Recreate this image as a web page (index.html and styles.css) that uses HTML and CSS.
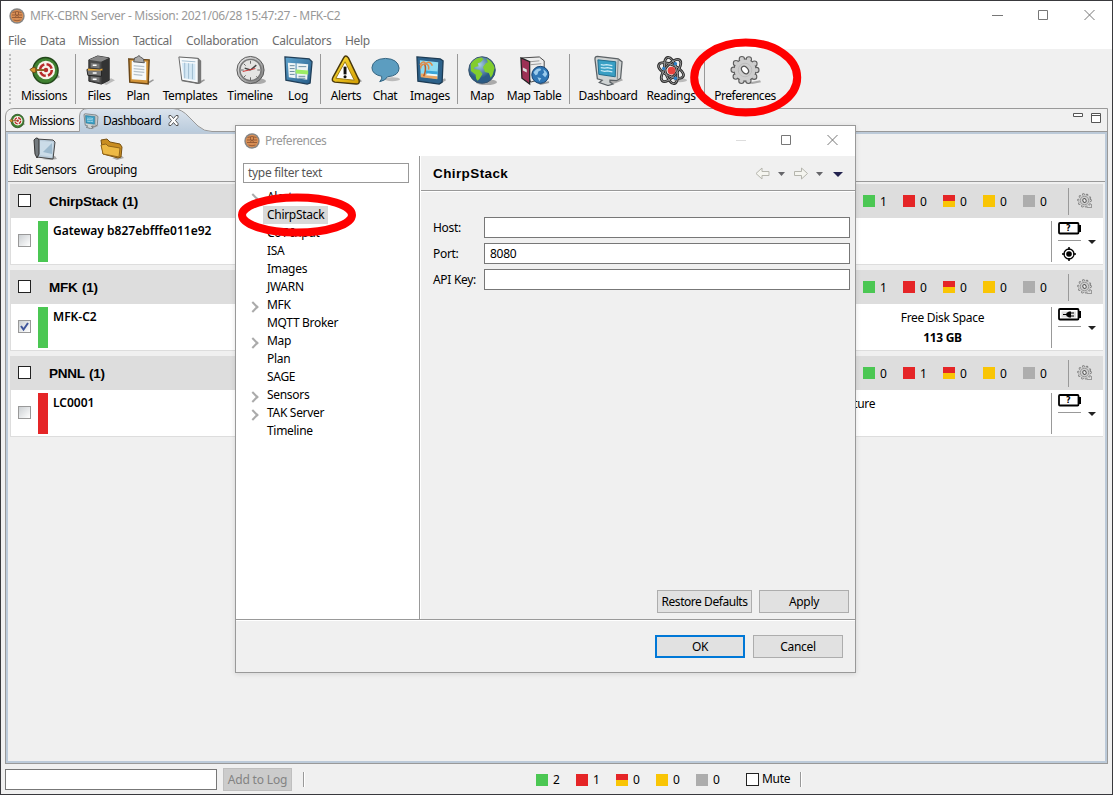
FILE: index.html
```html
<!DOCTYPE html>
<html lang="en">
<head>
<meta charset="utf-8">
<title>MFK-CBRN Server</title>
<link rel="stylesheet" href="styles.css">
</head>
<body>
<svg class="defs" width="0" height="0">
  <defs>
    <linearGradient id="blue" x2="1" y2="1"><stop stop-color="#5fa3cd"/><stop offset="1" stop-color="#255b87"/></linearGradient>
    <linearGradient id="tabg" x2="0" y2="1"><stop stop-color="#dce4ed"/><stop offset="1" stop-color="#b9cbdc"/></linearGradient>
    <linearGradient id="gold" x2="1" y2="1"><stop stop-color="#ffe23c"/><stop offset="1" stop-color="#d19b00"/></linearGradient>
    <linearGradient id="metal" x2="1" y2="1"><stop stop-color="#eee"/><stop offset="1" stop-color="#777"/></linearGradient>
    <radialGradient id="ocean" cx=".4" cy=".3"><stop stop-color="#a9cfe6"/><stop offset="1" stop-color="#2b5b85"/></radialGradient>
    <symbol id="logo" viewBox="0 0 16 16"><circle cx="8" cy="8" r="7.700" fill="#858585"/><circle cx="8" cy="8" r="6.300" fill="#d98f55"/><path d="M3.500 4.500Q8 2.500 12.500 4.500M3 7H13M3 9.500H13M4.500 12Q8 13.500 11.500 12M6.500 4V7M9.500 4V7M6 9.500L8 7L10 9.500" fill="none" stroke="#8a5230" stroke-width=".8"/></symbol>
    <symbol id="target" viewBox="0 0 32 32"><path d="M18 29l14-6-2-3z" fill="#aaa"/><ellipse cx="17" cy="16" rx="13" ry="13.500" fill="#3f8130" stroke="#23471b" stroke-width="1.500"/><circle cx="17.500" cy="15.500" r="9.500" fill="#f7f3e9"/><circle cx="17.500" cy="15.500" r="6" fill="none" stroke="#b92b2b" stroke-width="2.600" stroke-dasharray="7 2.400"/><circle cx="17.500" cy="15.500" r="2.300" fill="#b92b2b"/><path d="M5 15.500H16" stroke="#8a6424" stroke-width="2"/><path d="M1 15l3-2h3v5H4z" fill="#d9962f" stroke="#6b4a1a"/></symbol>
    <symbol id="monitor" viewBox="0 0 32 32"><path d="M14 27l15-3 2 2-10 4z" fill="#aaa"/><path d="M2 4q0-2.500 2.500-2.500L26 4l4 3-1.500 17-4 2.500-7-.5v2l3 2-5 1.500-9-3 3-2.500-5-1.500z" fill="#cfd3d3" stroke="#5b6165" stroke-width="1.300"/><path d="M26 4l-1 22" stroke="#888"/><path d="M5 5l18.500 2-.5 15.500L6 20z" fill="#399fc4" stroke="#216b8b"/><path d="M8 10l3 .5 3-.5 6 1M8 13l4 .5 3-.5 5 1M8 16l4 1 3-.5 5 1" fill="none" stroke="#c9ebf7" stroke-width="1.300"/></symbol>
    <symbol id="gear" viewBox="0 0 32 32"><path d="M17 29l14-3 1 2-9 2z" fill="#aaa"/><g fill="none" stroke-linecap="round"><circle cx="15.500" cy="15.500" r="11.700" stroke="#5c5c5c" stroke-width="6.600" stroke-dasharray="0 7.351"/><circle cx="15.500" cy="15.500" r="10.800" stroke="#5c5c5c" stroke-width="2.400"/><circle cx="15.500" cy="15.500" r="11.700" stroke="#cdcdcd" stroke-width="4.400" stroke-dasharray="0 7.351"/></g><circle cx="15.500" cy="15.500" r="10.900" fill="#cdcdcd"/><circle cx="15.500" cy="15.500" r="7" fill="none" stroke="#bcbcbc"/><ellipse cx="15.500" cy="15.500" rx="3" ry="4.300" transform="rotate(-40 15.500 15.500)" fill="#fff" stroke="#555" stroke-width="1.300"/></symbol>
    <symbol id="smallgear" viewBox="0 0 16 16"><path d="M10 14.500h5M14.500 11v3" stroke="#999"/><g fill="none" stroke-linecap="round"><circle cx="7.500" cy="7.500" r="5.900" stroke="#777" stroke-width="2.800" stroke-dasharray="0 3.707"/><circle cx="7.500" cy="7.500" r="5.900" stroke="#d0d0d0" stroke-width="1.300" stroke-dasharray="0 3.707"/></g><circle cx="7.500" cy="7.500" r="5.500" fill="#cfcfcf"/><circle cx="7.500" cy="7.500" r="4.200" fill="none" stroke="#8c8c8c" stroke-width=".8"/><ellipse cx="7.500" cy="7.500" rx="1.600" ry="2" transform="rotate(-35 7.500 7.500)" fill="#eee" stroke="#555"/></symbol>
    <symbol id="battery" viewBox="0 0 23 13"><rect x="1" y="1" width="19.500" height="10.500" rx="1" fill="#fff" stroke="#000" stroke-width="1.800"/><path d="M22 3v7" stroke="#000" stroke-width="2"/></symbol>
  </defs>
</svg>

<div class="window">
  <header class="titlebar">
    <svg class="i16"><use href="#logo"/></svg>
    <span class="title">MFK-CBRN Server - Mission: 2021/06/28 15:47:27 - MFK-C2</span>
    <svg class="caption" width="104" height="12" viewBox="0 0 104 12" fill="none" stroke="#777"><path d="M0 6.500h11M46.500 1.500h9v9h-9zM92.500 1l10 10M102.500 1l-10 10"/></svg>
  </header>
  <nav class="menubar"><span style="width:32px">File</span><span style="width:38px">Data</span><span style="width:55px">Mission</span><span style="width:53px">Tactical</span><span style="width:86px">Collaboration</span><span style="width:73px">Calculators</span><span>Help</span></nav>

  <div class="toolbar">
    <i class="grip"></i>
    <div class="tool" style="width:62px"><svg><use href="#target"/></svg><span>Missions</span></div>
    <i class="sep s1"></i>
    <div class="tool" style="width:38px"><svg viewBox="0 0 32 32"><path d="M18 29l10-5 4 2-9 5z" fill="#bbb"/><path d="M5 5l9-4 12 2v23l-8 4L5 27z" fill="#4a4a4a" stroke="#2a2a2a"/><path d="M5 5l9-4 12 2-8 4z" fill="#888"/><path d="M18 7l8-4v23l-8 4z" fill="#333"/><path d="M7 8l9 1v5l-9-1zM7 22l9 1v5l-9-2z" fill="#777"/><path d="M3 15l3-1 12 1v7L4 21z" fill="#777" stroke="#222"/><path d="M4 14l12 1 3-1v2H4z" fill="#e9aa3a"/><path d="M9 10.500h4M9 18.500h4M9 25h4" stroke="#fff" stroke-width="1.500"/></svg><span>Files</span></div>
    <div class="tool" style="width:40px"><svg viewBox="0 0 32 32"><path d="M22 30l9-5 1 1-6 4z" fill="#999"/><path d="M6 4l21 1-1 25-19-2z" fill="#d39438" stroke="#6b4718" stroke-width="1.500"/><path d="M9 6l15 1v19L9 25z" fill="#f6f9fa"/><path d="M11 11l11 1M11 14l11 1M11 17l11 1M11 20l9 1" stroke="#b7c2c9" stroke-width="1.300"/><path d="M11 7l1-4 3-1q1-3 3 0l3 2 1 4z" fill="#aaa" stroke="#555"/></svg><span>Plan</span></div>
    <div class="tool" style="width:64px"><svg viewBox="0 0 32 32"><path d="M20 30l10-5 1 1-6 4z" fill="#999"/><path d="M5 2l19 1 3 3v23l-3 1-17-3z" fill="#777"/><path d="M4 2l20 1.500V29L7 26z" fill="#f8fafb" stroke="#666"/><path d="M7 8l14 1v17L9 24z" fill="#d4e8f5"/><path d="M7 6l14 1M10 8v16M14 8.500v16M18 9v16" stroke="#9fbcd0"/></svg><span>Templates</span></div>
    <div class="tool" style="width:56px"><svg viewBox="0 0 32 32"><ellipse cx="22" cy="27" rx="10" ry="3" fill="#aaa"/><circle cx="16" cy="15.500" r="14" fill="url(#metal)" stroke="#555"/><circle cx="16" cy="15.500" r="11" fill="#e4e4e2" stroke="#777" stroke-width="1.500"/><path d="M16 6v3M16 23v3M6 15.500h3M23 15.500h3M9 9l2 2M22 22l2 2M9 23l2-2" stroke="#666"/><path d="M16 15.500l6-5M16 15.500l-6-2" stroke="#444" stroke-width="1.500"/><path d="M8 17l13-3" stroke="#c33"/></svg><span>Timeline</span></div>
    <div class="tool" style="width:40px"><svg viewBox="0 0 32 32"><path d="M2 2l25 2 3 3-2 22-3 1L3 26z" fill="url(#blue)" stroke="#1f3e58" stroke-width="1.300"/><path d="M5 8l8 .5V24l-7-1zM14 8.500l12 1-1 16-11-1.500z" fill="#eef4f5"/><path d="M13 15l13 1v4l-13-1z" fill="#9bec65"/><path d="M7 11h5M7 14h5M7 17h5M7 20h5M16 12h8M16 22h7M16 24h7" stroke="#678b9f"/></svg><span>Log</span></div>
    <i class="sep s2"></i>
    <div class="tool" style="width:40px"><svg viewBox="0 0 32 32"><path d="M25 30l7-3-5-5z" fill="#999"/><path d="M13 3q2-4 5 0l11 23q1 4-3 4L4 28q-4-1-2-5z" fill="url(#gold)" stroke="#49380c" stroke-width="1.500"/><path d="M14.500 7L24 26 5 24z" fill="#fff" stroke="#9b7a15"/><path d="M14.500 12v8" stroke="#111" stroke-width="3"/><circle cx="14.500" cy="22.500" r="1.600" fill="#111"/></svg><span>Alerts</span></div>
    <div class="tool" style="width:38px"><svg viewBox="0 0 32 32"><ellipse cx="23" cy="25" rx="8" ry="2" fill="#bbb"/><path d="M12 22Q2 20 2 13 3 4 16 3.500q13 .5 14 10 0 8-12 9-2 4-8 5 3-3 2-5.500z" fill="#5c9dc0" stroke="#31617e"/></svg><span>Chat</span></div>
    <div class="tool" style="width:52px"><svg viewBox="0 0 32 32"><path d="M18 29l13-5 1 2-6 4z" fill="#aaa"/><path d="M2 2l24 2 3 2-1 22-3 2L3 27z" fill="#2d628b" stroke="#1c3b54" stroke-width="1.300"/><path d="M5 5.500l19 2-1 17-17-2z" fill="#8fdcf2"/><path d="M6 19q9 0 17 2v4L6 23z" fill="#e9a664"/><path d="M11 16l12.500 1v3l-12-1z" fill="#3ba5d8"/><path d="M13 19l10 1v2l-12-1z" fill="#eefcff"/><path d="M9 22q3-7 1-13" stroke="#b55c29" stroke-width="1.600" fill="none"/><path d="M5 10q4-5 6-1 4-4 7 2M11 9q4 1 3 6M11 9q-6 1-5 5" fill="none" stroke="#e08b4a" stroke-width="1.600"/></svg><span>Images</span></div>
    <i class="sep s3"></i>
    <div class="tool" style="width:40px"><svg viewBox="0 0 32 32"><ellipse cx="20" cy="28" rx="11" ry="3" fill="#aaa"/><circle cx="15.500" cy="15.500" r="13.700" fill="url(#ocean)" stroke="#35516a"/><path d="M4 9q4-6 11-6.500l2 2-3 3-3 1 1 3-4 1-1 2 6 1 3 4-3 5-2 2q-2-1-2-6l-5-4zM20 3.500q7 3 8.500 10l-2 7-2 3-2-5-4-1-2-5 3-4 2-1z" fill="#82cd2d"/></svg><span>Map</span></div>
    <div class="tool" style="width:64px"><svg viewBox="0 0 32 32"><path d="M19 29l12-2v2l-9 2z" fill="#999"/><path d="M3 3l18-1 5 4v18l-14 4z" fill="#ececec" stroke="#444"/><path d="M11 7l10-1M12 10l11-1" stroke="#999"/><path d="M2 3l9 4v23l-8-6z" fill="#9c3155" stroke="#222" stroke-width="1.300"/><path d="M4 13l4 2v3l-4-2z" fill="#ddd"/><circle cx="22" cy="20.500" r="8.800" fill="#2f76b5" stroke="#17406c"/><path d="M15 18q3-5 7-4l1 1.500-3 1.500-1 3-2 1zM25 15q4 2 4 5l-2 3-3-3 2-2zM19 23l4 1-2 3z" fill="#9bcbec"/></svg><span>Map Table</span></div>
    <i class="sep s4"></i>
    <div class="tool" style="width:68px"><svg><use href="#monitor"/></svg><span>Dashboard</span></div>
    <div class="tool" style="width:58px"><svg viewBox="0 0 32 32" fill="none"><ellipse cx="25" cy="26" rx="7" ry="2" fill="#bbb"/><g stroke="#2b2b2b" stroke-width="2.800"><ellipse cx="15.500" cy="16" rx="14" ry="6" transform="rotate(25 15.500 16)"/><ellipse cx="15.500" cy="16" rx="14" ry="6" transform="rotate(75 15.500 16)"/><ellipse cx="15.500" cy="16" rx="14" ry="6" transform="rotate(130 15.500 16)"/></g><g stroke="#999" stroke-width=".9"><ellipse cx="15.500" cy="16" rx="14" ry="6" transform="rotate(25 15.500 16)"/><ellipse cx="15.500" cy="16" rx="14" ry="6" transform="rotate(75 15.500 16)"/><ellipse cx="15.500" cy="16" rx="14" ry="6" transform="rotate(130 15.500 16)"/></g><circle cx="16" cy="16" r="4" fill="#e8433d"/><g fill="#2d7fc4"><circle cx="20" cy="9" r="1.800"/><circle cx="8" cy="14" r="1.800"/><circle cx="20" cy="24" r="1.800"/></g></svg><span>Readings</span></div>
    <i class="sep s5"></i>
    <div class="tool prefs" style="width:68px"><svg><use href="#gear"/></svg><span>Preferences</span></div>
  </div>

  <main class="folder">
    <div class="tabs">
      <svg class="tabshape" width="1103" height="24" viewBox="0 0 1103 24" fill="none" stroke="#999"><path d="M.5 24V8Q1 .5 9 .5H1102.500V24"/><path d="M0 23.500H74.500V8Q75 .5 83 .5H168Q177 1 184 9L193 18Q199 23.500 207 23.500H1103V24H0z" fill="url(#tabg)" stroke="none"/><path d="M0 23.500H74.500V8Q75 .5 83 .5H168Q177 1 184 9L193 18Q199 23.500 207 23.500H1103"/></svg>
      <div class="tab first"><svg class="i16"><use href="#target"/></svg><span>Missions</span></div>
      <div class="tab"><svg class="i16"><use href="#monitor"/></svg><span>Dashboard</span><svg width="11" height="11" viewBox="0 0 11 11"><path d="M1 .5h2l2.500 3 2.500-3h2v2L7.500 5.500l2.500 3v2H8l-2.500-3-2.500 3H1v-2l2.500-3L1 2.500z" fill="#fff" stroke="#555"/></svg></div>
      <svg class="viewbtns" width="29" height="12" viewBox="0 0 29 12" fill="#fff" stroke="#555"><path d="M.5 1.500h9v3h-9zM18.500 1.500h9v9h-9zM18.500 3.500h9"/></svg>
    </div>
    <div class="content">
      <div class="subbar">
        <div class="subtool" style="width:71px"><svg width="26" height="24" viewBox="0 0 26 24"><path d="M10 22l13-3 2 3-6 1z" fill="#aaa"/><path d="M4 2l17 1 2 2-2 17L5 20z" fill="#b9cbd9" stroke="#444"/><path d="M8 4l13 1-1 15L8 18z" fill="#cbdce8"/><path d="M11 15l9-9v11z" fill="#9cb9cd"/><path d="M2 3q3-4 5 0v14l-2 4-2-4z" fill="#747a7e" stroke="#333"/></svg><span>Edit Sensors</span></div>
        <div class="subtool" style="width:64px"><svg width="26" height="24" viewBox="0 0 26 24"><path d="M13 21l10-2 2 2-7 2z" fill="#aaa"/><path d="M2 3l6-1 3 3 10 2 2 3-1 10-3 1-15-4z" fill="#c98d20" stroke="#785112"/><path d="M2 8l5-1 2 2 12 2-1 9-16-3z" fill="#edb944" stroke="#936619"/></svg><span>Grouping</span></div>
      </div>

      <section class="group">
        <div class="ghead"><i class="check"></i><b>ChirpStack (1)</b>
          <div class="counts"><i class="g"></i><span>1</span><i class="r"></i><span>0</span><i class="ry"></i><span>0</span><i class="y"></i><span>0</span><i class="n"></i><span>0</span></div>
          <i class="vline"></i><svg class="i16"><use href="#smallgear"/></svg></div>
        <div class="row"><i class="check dim"></i><i class="bar green"></i><b>Gateway b827ebfffe011e92</b>
          <div class="side"><svg class="bat" width="23" height="13"><use href="#battery"/></svg><span class="q">?</span><i class="hl"></i><svg class="aim" width="14" height="14" viewBox="0 0 14 14"><circle cx="7" cy="7" r="5" fill="none" stroke="#000" stroke-width="1.300"/><circle cx="7" cy="7" r="2.800"/><path d="M7 0v3M7 11v3M0 7h3M11 7h3" stroke="#000" stroke-width="1.500"/></svg></div><i class="down"></i></div>
      </section>
      <section class="group">
        <div class="ghead"><i class="check"></i><b>MFK (1)</b>
          <div class="counts"><i class="g"></i><span>1</span><i class="r"></i><span>0</span><i class="ry"></i><span>0</span><i class="y"></i><span>0</span><i class="n"></i><span>0</span></div>
          <i class="vline"></i><svg class="i16"><use href="#smallgear"/></svg></div>
        <div class="row"><i class="check dim"><svg width="11" height="11" viewBox="0 0 11 11"><path d="M2 5l2.500 3.500L9 2" fill="none" stroke="#3f559b" stroke-width="2"/></svg></i><i class="bar green"></i><b>MFK-C2</b>
          <div class="reading disk"><span>Free Disk Space</span><b>113 GB</b></div>
          <div class="side"><svg class="bat" width="23" height="13" viewBox="0 0 23 13"><use href="#battery"/><path d="M3.500 3.500h14.500v6H3.500z" fill="#ddd"/><path d="M5 6.500h4M13 5h3M13 8h3" stroke="#000" stroke-width="1.200"/><path d="M13 3.500v6h-2q-3-1-3-3t3-3z"/></svg><i class="hl"></i></div><i class="down"></i></div>
      </section>
      <section class="group">
        <div class="ghead"><i class="check"></i><b>PNNL (1)</b>
          <div class="counts"><i class="g"></i><span>0</span><i class="r"></i><span>1</span><i class="ry"></i><span>0</span><i class="y"></i><span>0</span><i class="n"></i><span>0</span></div>
          <i class="vline"></i><svg class="i16"><use href="#smallgear"/></svg></div>
        <div class="row"><i class="check dim"></i><i class="bar red"></i><b>LC0001</b>
          <div class="reading temp"><span>Temperature</span></div>
          <div class="side"><svg class="bat" width="23" height="13"><use href="#battery"/></svg><span class="q">?</span><i class="hl"></i></div><i class="down"></i></div>
      </section>
    </div>
  </main>

  <footer class="status">
    <div class="entry"></div><div class="btn add">Add to Log</div><i class="ssep"></i>
    <div class="counts"><i class="g"></i><span>2</span><i class="r"></i><span>1</span><i class="ry"></i><span>0</span><i class="y"></i><span>0</span><i class="n"></i><span>0</span></div>
    <i class="check"></i><span class="mute">Mute</span><i class="ssep end"></i>
  </footer>
</div>

<div class="dialog">
  <div class="dtitle"><svg class="i16"><use href="#logo"/></svg><span>Preferences</span>
    <svg class="dcaption" width="102" height="12" viewBox="0 0 102 12" fill="none" stroke="#777"><path d="M0 6.500h10" stroke="#ddd"/><path d="M45.500 1.500h9v9h-9zM91.500 1l10 10M101.500 1l-10 10"/></svg></div>
  <div class="dbody">
    <aside class="tree">
      <div class="filter">type filter text</div>
      <ul><li class="more">Alerts</li><li><span class="sel">ChirpStack</span></li><li>CoT Input</li><li>ISA</li><li>Images</li><li>JWARN</li><li class="more">MFK</li><li>MQTT Broker</li><li class="more">Map</li><li>Plan</li><li>SAGE</li><li class="more">Sensors</li><li class="more">TAK Server</li><li>Timeline</li></ul>
    </aside>
    <div class="page">
      <div class="phead"><b>ChirpStack</b><svg width="90" height="14" viewBox="0 0 90 14"><g fill="#f5f5f0" stroke="#b5b5ad"><path d="M1 7.500l6-5.500v3.500h7v4H7V13z"/><path d="M52.500 7.500L46.500 2v3.500h-7v4h7V13z"/></g><path d="M23 6h7l-3.500 4zM61 6h7l-3.500 4z" fill="#66666a"/><path d="M78 6h10l-5 5z" fill="#23234f"/></svg></div>
      <div class="form"><label>Host:</label><div class="field"></div><label>Port:</label><div class="field">8080</div><label>API Key:</label><div class="field"></div></div>
      <div class="pbtns"><div class="btn restore">Restore Defaults</div><div class="btn">Apply</div></div>
    </div>
  </div>
  <div class="dfoot"><div class="btn ok">OK</div><div class="btn">Cancel</div></div>
</div>
<svg class="marks" width="1113" height="795" fill="none" stroke="#f00" stroke-width="8"><ellipse cx="745.700" cy="77.500" rx="51.500" ry="35"/><ellipse cx="297" cy="215" rx="55" ry="17.500"/></svg>
</body>
</html>
```
FILE: styles.css
```css
* { box-sizing: border-box; }
body { margin: 0; width: 1113px; height: 795px; overflow: hidden; position: relative; font: 12px/16px "Noto Sans", sans-serif; letter-spacing: -.3px; color: #000; background: #f0f0f0; white-space: nowrap; }
i { display: block; flex: none; }
svg { display: block; flex: none; }
.defs { position: absolute; }
.i16 { width: 16px; height: 16px; }
.window { width: 1113px; height: 795px; border: 1px solid #39393d; display: flex; flex-direction: column; background: #f0f0f0; }
.titlebar { height: 30px; background: #fff; display: flex; align-items: center; padding: 0 16px 0 8px; color: #999; }
.title { margin-left: 5px; }
.caption { margin: -2px 0 0 auto; }
.menubar { height: 18px; background: #fff; display: flex; padding: 2px 0 0 7px; color: #6d6d6d; }
.toolbar { height: 59px; display: flex; padding: 5px 0 0 8px; }
.grip { width: 4px; height: 50px; background: repeating-linear-gradient(#bbb 0 2px, transparent 2px 4px); background-size: 2px 4px; background-repeat: repeat-y; }
.tool { flex: none; display: flex; flex-direction: column; align-items: center; letter-spacing: -.35px; }
.tool svg { width: 31px; height: 31px; margin: 1px 0 2px; }
.tool.prefs { letter-spacing: -.5px; }
.sep { width: 1px; height: 50px; background: #999; }
.s1 { margin: 0 4px 0 0; }
.s2 { margin: 0 5px 0 2px; }
.s3 { margin: 0 4px 0 1px; }
.s4 { margin: 0 4px 0 3px; }
.s5 { margin: 0 6px 0 4px; }
.folder { width: 1103px; height: 656px; margin-left: 4px; display: flex; flex-direction: column; }
.tabs { height: 24px; position: relative; display: flex; letter-spacing: -.45px; }
.tabshape { position: absolute; left: 0; top: 0; }
.tab { position: relative; display: flex; align-items: center; gap: 4px; padding: 1px 0 0 3px; }
.tab.first { width: 75px; padding-left: 4px; }
.tab span + svg { margin-left: 3px; }
.viewbtns { position: relative; margin: 4px 6px 0 auto; }
.content { height: 632px; border: 1px solid #999; border-top: 0; box-shadow: inset 0 0 0 2px #bccad9; padding: 2px; }
.subbar { height: 48px; border-bottom: 1px solid #999; display: flex; padding: 3px 0 0 1px; letter-spacing: -.45px; }
.subtool { display: flex; flex-direction: column; align-items: center; }
.subtool svg { margin-bottom: 1px; }
.group { margin: 2px 2px 3px 2px; height: 81px; }
.group + .group { margin-top: 5px; }
.ghead { height: 34px; background: #ddd; display: flex; align-items: center; padding: 0 10px 0 8px; }
.ghead > .check { margin-top: -2px; }
.ghead b { margin-left: 18px; font: bold 13.500px "Liberation Sans", sans-serif; letter-spacing: -.25px; word-spacing: 1px; }
.check { width: 13px; height: 13px; background: #fff; border: 1px solid #222; }
.check.dim { border-color: #999; background: linear-gradient(135deg, #ccd0d3, #fff); margin-top: 13px; }
.counts { display: flex; align-items: center; }
.counts i { width: 12px; height: 12px; margin-right: 5px; }
.counts span { width: 23px; margin-top: 1px; }
.counts .g { background: #4bc753; }
.counts .r { background: #e52527; }
.counts .ry { background: linear-gradient(#e52527 50%, #f9c505 50%); }
.counts .y { background: #f9c505; }
.counts .n { background: #adadad; }
.ghead .counts { margin-left: auto; }
.vline { width: 1px; height: 27px; background: #999; margin: 0 8px 0 5px; }
.row { height: 47px; background: #fff; border: solid #ddd; border-width: 0 0 1px 1px; display: flex; align-items: flex-start; padding: 3px 7px 0 7px; }
.bar { width: 10px; height: 41px; margin: 0 5px 0 7px; }
.green { background: #4bc753; }
.red { background: #e52527; }
.row > b { margin-top: 2px; letter-spacing: 0; font-weight: 600; }
.side { width: 30px; height: 41px; border-left: 1px solid #999; padding: 1px 0 0 6px; position: relative; margin-left: auto; }
.q { position: absolute; left: 14px; top: 1px; font: bold 8px/13px "DejaVu Sans", sans-serif; }
.hl { width: 23px; height: 1px; background: #999; margin-top: 5px; }
.aim { margin: 6px 0 0 4px; }
.down { border: solid transparent; border-width: 4px 4px 0; border-top-color: #222; margin: 19px 0 0 7px; }
.reading { display: flex; flex-direction: column; align-items: center; gap: 4px; width: 217px; margin: 3px 0 0 auto; }
.reading + .side { margin-left: 0; }
.reading.temp { margin-right: 0; width: 421px; }
.status { height: 29px; display: flex; align-items: center; padding: 2px 0 0 4px; }
.status .counts span { margin-top: 0; }
.entry { width: 212px; height: 21px; border: 1px solid #777; background: #fff; margin-right: 6px; }
.btn { width: 90px; height: 23px; border: 1px solid #adadad; background: #e1e1e1; text-align: center; line-height: 21px; }
.btn.add { width: 69px; color: #838383; background: #ccc; border-color: #bfbfbf; letter-spacing: -.15px; }
.ssep { width: 2px; height: 15px; background: #999; border-right: 1px solid #fff; margin: 0 231px 0 11px; }
.ssep.end { margin: 0 0 0 10px; }
.status .check { margin: -1px 3px 0 10px; }
.mute { margin-top: -1px; }
.dialog { position: absolute; left: 235px; top: 125px; width: 621px; height: 548px; border: 1px solid #999; background: #f0f0f0; display: flex; flex-direction: column; box-shadow: 0 1px 5px rgba(0,0,0,.12); }
.dtitle { height: 30px; background: #fff; display: flex; align-items: center; padding: 0 17px 0 8px; color: #999; }
.dtitle span { margin-left: 5px; letter-spacing: -.5px; }
.dcaption { margin: -2px 0 0 auto; }
.dbody { display: flex; height: 463px; }
.tree { width: 184px; background: #fff; border-right: 1px solid #999; padding: 7px; }
.filter { width: 166px; height: 20px; border: 1px solid #999; padding: 1px 4px; color: #555; }
.tree ul { list-style: none; margin: 5px 0 0; padding: 0 0 0 20px; }
.tree li { height: 18px; line-height: 18px; padding-left: 4px; position: relative; }
.more::before { content: ""; position: absolute; left: -14px; top: 7px; width: 6px; height: 6px; border: solid #aaa; border-width: 2px 2px 0 0; transform: rotate(45deg); }
.sel { display: inline-block; height: 18px; background: #d9d9d9; margin-left: -4px; padding: 0 4px; }
.page { flex: 1; border-left: 1px solid #fff; display: flex; flex-direction: column; }
.phead { height: 35px; border-bottom: 1px solid #999; box-shadow: 0 1px #fff; display: flex; align-items: center; justify-content: space-between; padding: 0 10px 0 12px; }
.phead b { font: bold 13.500px "Liberation Sans", sans-serif; letter-spacing: .4px; padding-top: 1px; }
.form { display: grid; grid-template-columns: 51px 366px; row-gap: 5px; padding: 26px 0 0 12px; }
.field { height: 21px; border: 1px solid #777; background: #fff; padding: 2px 5px; }
.form label { padding-top: 3px; }
.pbtns { display: flex; justify-content: flex-end; gap: 7px; margin-top: auto; padding: 0 6px 6px 0; }
.restore { width: 95px; letter-spacing: -.45px; }
.dfoot { flex: 1; border-top: 1px solid #999; box-shadow: inset 0 1px #fff; display: flex; gap: 8px; justify-content: flex-end; padding: 15px 12px 0 0; }
.ok { border: 2px solid #0078d7; line-height: 19px; }
.marks { position: absolute; left: 0; top: 0; pointer-events: none; }
```
